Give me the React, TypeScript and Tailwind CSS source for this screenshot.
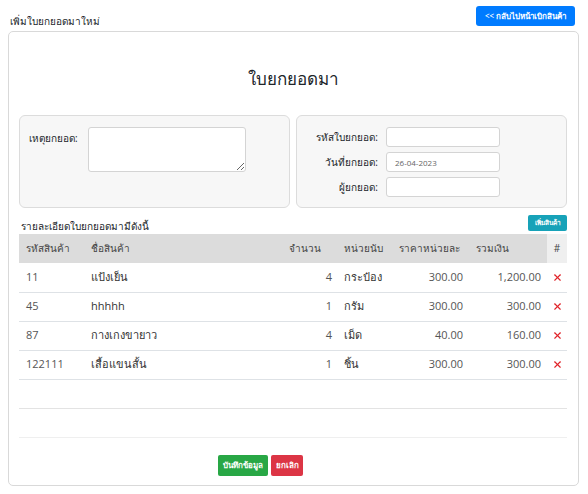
import { X } from 'lucide-react'

type Item = {
  code: string
  name: string
  qty: number
  unit: string
  price: string
  total: string
}

const items: Item[] = [
  { code: '11', name: 'แป้งเย็น', qty: 4, unit: 'กระป๋อง', price: '300.00', total: '1,200.00' },
  { code: '45', name: 'hhhhh', qty: 1, unit: 'กรัม', price: '300.00', total: '300.00' },
  { code: '87', name: 'กางเกงขายาว', qty: 4, unit: 'เม็ด', price: '40.00', total: '160.00' },
  { code: '122111', name: 'เสื้อแขนสั้น', qty: 1, unit: 'ชิ้น', price: '300.00', total: '300.00' },
]

export default function App() {
  return (
    <div className="w-[588px] h-[494px] bg-white text-[#212529] font-['Open_Sans',sans-serif] overflow-hidden">
      {/* Top bar */}
      <div className="flex items-end justify-between pl-[10px] pr-[13px] pt-[6px] h-[31px] pb-[3px]">
        <span className="text-[10px] leading-[14px]">เพิ่มใบยกยอดมาใหม่</span>
        <button className="h-[20px] w-[99px] mb-[2px] self-start rounded-[3px] bg-[#007bff] text-white text-[8px] font-semibold">
          &lt;&lt; กลับไปหน้าเบิกสินค้า
        </button>
      </div>

      {/* Card */}
      <div className="ml-[8px] mr-[9px] h-[455px] rounded-[5px] border border-[#d9d9d9] pl-[10px] pr-[11px] flex flex-col">
        <div className="h-[83px] flex items-center justify-center pt-[10px]">
          <h1 className="text-[17px] leading-none">ใบยกยอดมา</h1>
        </div>

        {/* Panels */}
        <div className="flex gap-[6px] h-[93px]">
          <div className="w-[271px] shrink-0 rounded-[6px] border border-[#dcdcdc] bg-[#f7f7f7] pl-[9px] pt-[11px] flex items-start gap-[9px]">
            <label className="text-[10px] leading-[14px] pt-[4px] w-[50px]">เหตุยกยอด:</label>
            <textarea className="w-[158px] h-[45px] rounded-[3px] border border-[#d4d4d4] bg-white resize-y" />
          </div>
          <div className="w-[271px] shrink-0 rounded-[6px] border border-[#dcdcdc] bg-[#f7f7f7] pt-[11px] flex flex-col gap-[5px]">
            {[
              { label: 'รหัสใบยกยอด:', value: '' },
              { label: 'วันที่ยกยอด:', value: '26-04-2023' },
              { label: 'ผู้ยกยอด:', value: '' },
            ].map((f) => (
              <div key={f.label} className="flex items-center">
                <label className="w-[81px] text-right text-[10px] leading-[14px]">{f.label}</label>
                <input
                  readOnly
                  value={f.value}
                  className="ml-[8px] w-[114px] h-[20px] rounded-[3px] border border-[#d4d4d4] bg-white px-[8px] text-[8px] text-[#666]"
                />
              </div>
            ))}
          </div>
        </div>

        {/* Table caption */}
        <div className="flex items-end justify-between h-[26px] pb-[2px]">
          <span className="text-[10px] leading-[12px] pl-[2px]">รายละเอียดใบยกยอดมามีดังนี้</span>
          <button className="h-[16px] w-[39px] mb-[1px] rounded-[2px] bg-[#17a2b8] text-white text-[6.5px] font-semibold">
            เพิ่มสินค้า
          </button>
        </div>

        <table className="w-[548px] table-fixed border-collapse text-[11px]">
          <colgroup>
            <col className="w-[65px]" />
            <col className="w-[198px]" />
            <col className="w-[57px]" />
            <col className="w-[53px]" />
            <col className="w-[78px]" />
            <col className="w-[77px]" />
            <col className="w-[20px]" />
          </colgroup>
          <thead>
            <tr className="h-[29px] bg-[#dcdcdc] text-[10px] text-[#444] font-normal">
              <th className="text-left font-normal px-[7px]">รหัสสินค้า</th>
              <th className="text-left font-normal px-[7px]">ชื่อสินค้า</th>
              <th className="text-left font-normal px-[7px]">จำนวน</th>
              <th className="text-left font-normal px-[5px]">หน่วยนับ</th>
              <th className="text-left font-normal px-[7px]">ราคาหน่วยละ</th>
              <th className="text-left font-normal px-[6px]">รวมเงิน</th>
              <th className="font-normal bg-[#efefef]">#</th>
            </tr>
          </thead>
          <tbody>
            {items.map((it) => (
              <tr key={it.code} className="h-[29px] border-b border-[#dee2e6] text-[#555]">
                <td className="px-[7px]">{it.code}</td>
                <td className="px-[7px] text-[#333]">{it.name}</td>
                <td className="px-[7px] text-right">{it.qty}</td>
                <td className="px-[5px] text-[#333]">{it.unit}</td>
                <td className="px-[7px] text-right">{it.price}</td>
                <td className="px-[6px] text-right">{it.total}</td>
                <td>
                  <X className="mx-auto h-[11px] w-[11px] text-[#e0242a]" strokeWidth={2.5} />
                </td>
              </tr>
            ))}
            <tr className="h-[29px] border-b border-[#e3e3e3]">
              <td colSpan={7} />
            </tr>
            <tr className="h-[29px] border-b border-[#efefef]">
              <td colSpan={7} />
            </tr>
          </tbody>
        </table>

        <div className="flex gap-[3px] mt-[17px] pl-[199px]">
          <button className="h-[21px] w-[50px] rounded-[2px] bg-[#28a745] text-white text-[8px] font-semibold">
            บันทึกข้อมูล
          </button>
          <button className="h-[21px] w-[32px] rounded-[2px] bg-[#dc3545] text-white text-[8px] font-semibold">
            ยกเลิก
          </button>
        </div>
      </div>
    </div>
  )
}
